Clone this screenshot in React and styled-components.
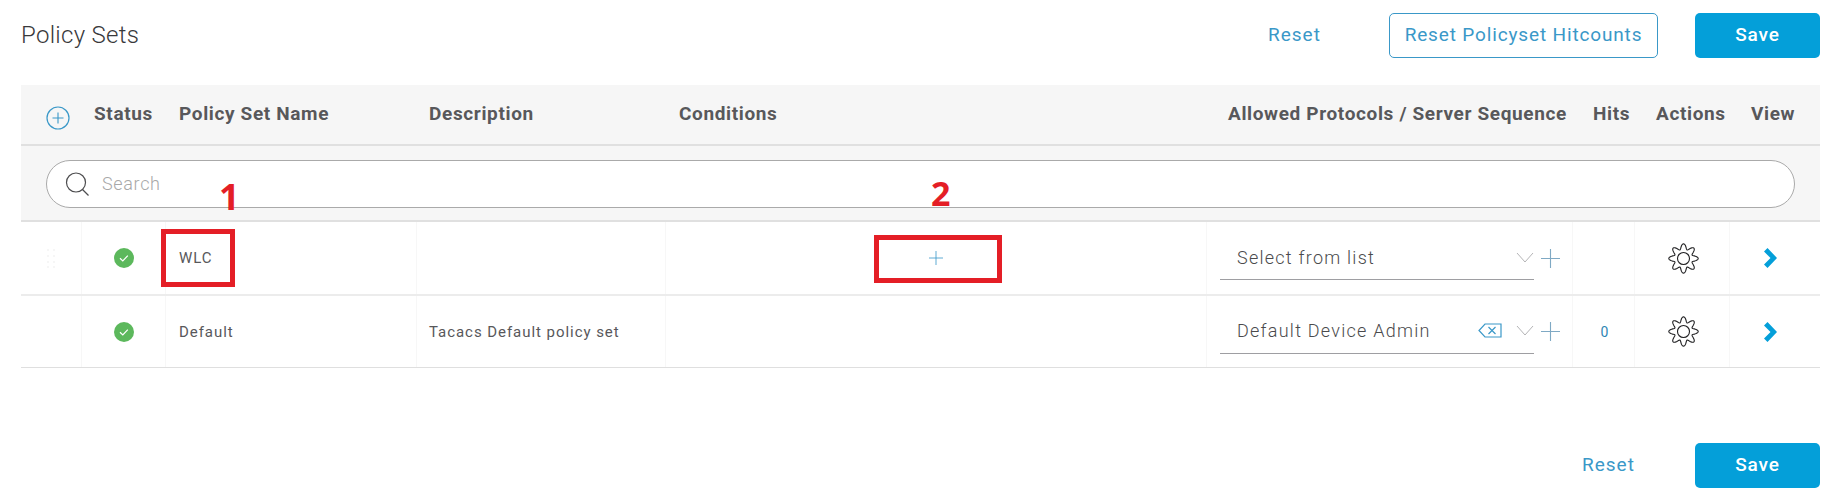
import React from 'react'
import styled, { createGlobalStyle } from 'styled-components'

const COLUMNS = '61px 84px 251px 249px 541px 366px 62px 95px 90px'
const BLUE = '#049fd9'
const LINK = '#3a98c8'

const GlobalStyle = createGlobalStyle`
  html, body {
    margin: 0;
    background: #fff;
    font-family: Roboto, "Liberation Sans", sans-serif;
    overflow: hidden;
  }
`

const Page = styled.div`
  position: relative;
  width: 1799px;
  height: 503px;
  padding: 13px 27px 0 21px;
`

const TopBar = styled.div`
  display: flex;
  align-items: center;
  height: 45px;
`

const Title = styled.h1`
  margin: 0 auto 0 0;
  padding-bottom: 2px;
  font-size: 24px;
  font-weight: 300;
  letter-spacing: 0.3px;
  color: #39393b;
`

const LinkButton = styled.button`
  border: 0;
  background: none;
  padding: 0 0 2px;
  width: ${(p) => p.$width}px;
  text-align: left;
  font: 400 19px Roboto, sans-serif;
  letter-spacing: 1px;
  color: ${LINK};
`

const OutlineButton = styled.button`
  box-sizing: border-box;
  width: 269px;
  height: 45px;
  padding: 0 0 2px;
  border: 1px solid #3a98c8;
  border-radius: 5px;
  background: #fff;
  font: 400 19px Roboto, sans-serif;
  letter-spacing: 0.85px;
  color: ${LINK};
  margin-right: 37px;
`

const SaveButton = styled.button`
  width: 125px;
  height: 45px;
  padding: 0 0 2px;
  border: 0;
  border-radius: 5px;
  background: ${BLUE};
  font: 500 19px Roboto, sans-serif;
  letter-spacing: 0.9px;
  color: #fff;
`

const Table = styled.div`
  margin-top: 27px;
`

const HeaderRow = styled.div`
  display: grid;
  grid-template-columns: ${COLUMNS};
  height: 59px;
  background: #f6f6f6;
  border-bottom: 2px solid #e0e0e0;
`

const HeaderCell = styled.div`
  display: flex;
  align-items: center;
  height: 57px;
  white-space: nowrap;
  padding-left: ${(p) => p.$pad}px;
  font-size: 19px;
  font-weight: 700;
  letter-spacing: 0.64px;
  color: #58585b;
`

const AddCell = styled.div`
  display: flex;
  align-items: center;
  padding: 6px 0 0 25px;
`

const SearchRow = styled.div`
  height: 76px;
  box-sizing: border-box;
  padding: 14px 25px 14px 25px;
  background: #f6f6f6;
  border-bottom: 2px solid #e0e0e0;
`

const SearchBox = styled.div`
  display: flex;
  align-items: center;
  gap: 12px;
  box-sizing: border-box;
  height: 48px;
  padding-left: 18px;
  background: #fff;
  border: 1px solid #aaa;
  border-radius: 24px;
`

const Placeholder = styled.span`
  padding-bottom: 2px;
  font-size: 18px;
  font-weight: 300;
  letter-spacing: 0.65px;
  color: #a8a8a8;
`

const Row = styled.div`
  display: grid;
  grid-template-columns: ${COLUMNS};
  height: ${(p) => p.$height}px;
  border-bottom: ${(p) => p.$line};
`

const Cell = styled.div`
  display: flex;
  align-items: center;
  box-sizing: border-box;
  min-width: 0;
  white-space: nowrap;
  padding-left: ${(p) => p.$pad || 0}px;
  justify-content: ${(p) => (p.$center ? 'center' : 'flex-start')};
  border-right: ${(p) => (p.$last ? '0' : '1px solid #f7f7f7')};
  font-size: 15px;
  letter-spacing: 0.95px;
  color: #58585b;
`

const Select = styled.div`
  display: flex;
  align-items: center;
  box-sizing: border-box;
  flex: none;
  width: 314px;
  height: 45px;
  margin-top: -1px;
  padding-left: 17px;
  border-bottom: 1px solid #9e9ea2;
  font-size: 18px;
  font-weight: 300;
  letter-spacing: 1.25px;
  color: #4a4a4c;
`

const SelectValue = styled.span`
  margin-right: auto;
`

const SelectIcons = styled.span`
  display: flex;
  align-items: center;
  gap: 14px;
`

const PlusSlot = styled.span`
  display: flex;
  margin-left: 7px;
`

const HitCount = styled.span`
  padding-left: 2px;
  font-size: 14px;
  letter-spacing: 0;
  color: #2f86b4;
`

const GearSlot = styled.span`
  display: flex;
  padding-left: 2px;
`

const ViewSlot = styled.span`
  display: flex;
  padding-right: 10px;
`

const BottomBar = styled.div`
  display: flex;
  justify-content: flex-end;
  align-items: center;
  margin-top: 75px;
`

const MarkBox = styled.div`
  position: absolute;
  box-sizing: border-box;
  left: ${(p) => p.$x}px;
  top: ${(p) => p.$y}px;
  width: ${(p) => p.$w}px;
  height: ${(p) => p.$h}px;
  border: 5px solid #e41e26;
`

const MarkNumber = styled.div`
  position: absolute;
  left: ${(p) => p.$x}px;
  top: ${(p) => p.$y}px;
  font: 700 ${(p) => p.$size}px/34px "Open Sans", sans-serif;
  color: #e41e26;
`

// eight rounded teeth, traced as a polar curve
const gearPath = (() => {
  const points = []
  for (let i = 0; i < 160; i++) {
    const a = (i / 160) * Math.PI * 2
    const r = 12 + 2.7 * Math.cos(8 * a)
    points.push(`${(15.5 + r * Math.sin(a)).toFixed(2)} ${(15.5 - r * Math.cos(a)).toFixed(2)}`)
  }
  return `M${points.join('L')}Z`
})()

const Gear = () => (
  <svg width="31" height="31" viewBox="0 0 31 31" fill="none" stroke="#1f1f21" strokeWidth="1.1">
    <path d={gearPath} />
    <circle cx="15.5" cy="15.5" r="6" />
  </svg>
)

const AddCircle = () => (
  <svg width="24" height="24" viewBox="0 0 24 24" fill="none" stroke="#3a98c8">
    <circle cx="12" cy="12" r="11" strokeWidth="1.2" />
    <path d="M12 6.5v11M6.5 12h11" strokeWidth="1.1" />
  </svg>
)

const SearchIcon = () => (
  <svg width="25" height="24" viewBox="0 0 25 24" fill="none" stroke="#4d4d4f" strokeWidth="1.2">
    <circle cx="11" cy="10.5" r="9.5" />
    <path d="M17.5 17.5l6 6" />
  </svg>
)

const StatusOk = () => (
  <svg width="20" height="20" viewBox="0 0 20 20">
    <circle cx="10" cy="10" r="10" fill="#5cb85c" />
    <path d="M6 10.3l2.8 2.7 5-5.4" fill="none" stroke="#fff" strokeWidth="1.2" />
  </svg>
)

const DragDots = () => (
  <svg width="8" height="20" viewBox="0 0 8 20" fill="#f6f6f6">
    {[1, 7].map((x) =>
      [2, 8, 14, 19].map((y) => <rect key={`${x}-${y}`} x={x - 1} y={y - 1} width="2" height="2" />)
    )}
  </svg>
)

const Chevron = () => (
  <svg width="18" height="11" viewBox="0 0 18 11" fill="none" stroke="#b4b4b6" strokeWidth="1">
    <path d="M1 1l8 9 8-9" />
  </svg>
)

const ThinPlus = ({ size = 19, color = '#7fa9c4' }) => (
  <svg width={size} height={size} viewBox="0 0 19 19" fill="none" stroke={color} strokeWidth="1.1">
    <path d="M9.5 0v19M0 9.5h19" />
  </svg>
)

const ClearIcon = () => (
  <svg width="24" height="15" viewBox="0 0 24 15" fill="none" stroke="#3a98c8" strokeWidth="1.2">
    <path d="M7 1h16v13H7L1 7.5z" />
    <path d="M10.5 4l7 7M17.5 4l-7 7" />
  </svg>
)

const ViewArrow = () => (
  <svg width="13" height="20" viewBox="0 0 13 20" fill={BLUE}>
    <path d="M0 3.5L3.5 0 13 10l-9.5 10L0 16.5 6.5 10z" />
  </svg>
)

const policySets = [
  { name: 'WLC', description: '', protocol: 'Select from list', hits: '', dots: true, height: 72, line: '2px solid #ececec' },
  { name: 'Default', description: 'Tacacs Default policy set', protocol: 'Default Device Admin', hits: '0', clear: true, height: 71, line: '1px solid #dfdfdf' },
]

const columnsHead = [
  ['Status', 12],
  ['Policy Set Name', 13],
  ['Description', 12],
  ['Conditions', 13],
  ['Allowed Protocols / Server Sequence', 21],
  ['Hits', 20],
  ['Actions', 21],
  ['View', 21],
]

const PolicyRow = ({ item }) => (
  <Row $height={item.height} $line={item.line}>
    <Cell $center>{item.dots && <DragDots />}</Cell>
    <Cell $center><StatusOk /></Cell>
    <Cell $pad={13}>{item.name}</Cell>
    <Cell $pad={12}>{item.description}</Cell>
    <Cell $center>{item.dots && <ThinPlus size={14} color="#3a98c8" />}</Cell>
    <Cell $pad={13}>
      <Select>
        <SelectValue>{item.protocol}</SelectValue>
        <SelectIcons>
          {item.clear && <ClearIcon />}
          <Chevron />
        </SelectIcons>
      </Select>
      <PlusSlot><ThinPlus /></PlusSlot>
    </Cell>
    <Cell $center><HitCount>{item.hits}</HitCount></Cell>
    <Cell $center><GearSlot><Gear /></GearSlot></Cell>
    <Cell $center $last><ViewSlot><ViewArrow /></ViewSlot></Cell>
  </Row>
)

const App = () => (
  <Page>
    <GlobalStyle />
    <TopBar>
      <Title>Policy Sets</Title>
      <LinkButton $width={121}>Reset</LinkButton>
      <OutlineButton>Reset Policyset Hitcounts</OutlineButton>
      <SaveButton>Save</SaveButton>
    </TopBar>

    <Table>
      <HeaderRow>
        <AddCell><AddCircle /></AddCell>
        {columnsHead.map(([label, pad]) => (
          <HeaderCell key={label} $pad={pad}>{label}</HeaderCell>
        ))}
      </HeaderRow>
      <SearchRow>
        <SearchBox>
          <SearchIcon />
          <Placeholder>Search</Placeholder>
        </SearchBox>
      </SearchRow>
      {policySets.map((item) => (
        <PolicyRow key={item.name} item={item} />
      ))}
    </Table>

    <BottomBar>
      <LinkButton $width={113}>Reset</LinkButton>
      <SaveButton>Save</SaveButton>
    </BottomBar>

    <MarkBox $x={161} $y={229} $w={74} $h={58} />
    <MarkBox $x={874} $y={235} $w={128} $h={48} />
    <MarkNumber $x={219} $y={180} $size={36}>1</MarkNumber>
    <MarkNumber $x={931} $y={176} $size={34}>2</MarkNumber>
  </Page>
)

export default App
